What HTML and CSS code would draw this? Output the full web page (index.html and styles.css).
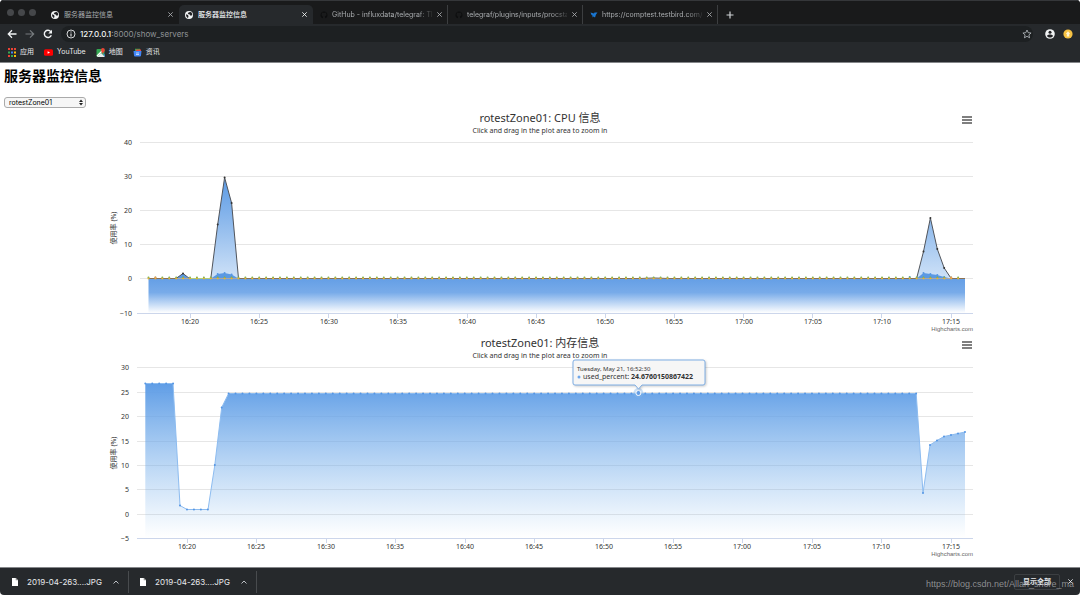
FILE: index.html
```html
<!DOCTYPE html>
<html lang="zh-CN">
<head>
<meta charset="utf-8">
<title>服务器监控信息</title>
<link rel="stylesheet" href="styles.css">
</head>
<body>
<svg class="defs" aria-hidden="true">
  <symbol id="globe" viewBox="0 0 16 16"><circle cx="8" cy="8" r="8" fill="#f1f3f4"/><path d="M2 6.500l4 1.500 1 2.500-1 3.500C3.500 13 2 10.500 2 6.500zM8 2.500l4-.5c2 1.500 2.800 4 2.300 6.500L11 9.500 9.500 7 7 6.500 5.500 4.500z" fill="#202124"/></symbol>
  <symbol id="cross" viewBox="0 0 8 8"><path d="M1.500 1.500l5 5M6.500 1.500L1.500 6.500" stroke="currentColor" stroke-width="1" fill="none"/></symbol>
  <symbol id="cat" viewBox="0 0 16 16"><path d="M8 1a7 7 0 0 0-2.200 13.600v-2.400C3.500 12.500 3.400 11 2.800 10.700c1.200-.2 1.500 1.200 3 .8.100-.6.300-1 .6-1.200C4 10 3 8.800 3 6.800c0-.8.300-1.500.8-2-.2-.7-.1-1.400.1-1.900.8 0 1.500.4 2 .8a8 8 0 0 1 4.200 0c.5-.4 1.200-.8 2-.8.300.5.300 1.300.1 1.900.5.500.8 1.200.8 2 0 2-1 3.200-3.400 3.500.4.400.6.900.6 1.600v2.700A7 7 0 0 0 8 1z" fill="#0c0d0e"/></symbol>
  <symbol id="bars" viewBox="0 0 10 8"><path d="M0 1h10M0 4h10M0 7h10" stroke="#555" stroke-width="1.600"/></symbol>
  <symbol id="file" viewBox="0 0 6 8"><path d="M0 0h3.700L6 2.300V8H0z" fill="#fff"/><path d="M3.700 0v2.300H6z" fill="#999"/></symbol>
  <symbol id="chevron" viewBox="0 0 8 8"><path d="M1.500 5.500L4 3l2.500 2.500" stroke="#bdc1c6" fill="none"/></symbol>
</svg>

<header class="browser">
  <div class="tabstrip">
    <div class="lights"><i></i><i></i><i></i></div>
    <div class="tab"><svg class="favicon"><use href="#globe"/></svg><span class="tab-title">服务器监控信息</span><button class="close" aria-label="关闭"><svg><use href="#cross"/></svg></button></div>
    <div class="tab active"><svg class="favicon"><use href="#globe"/></svg><span class="tab-title">服务器监控信息</span><button class="close" aria-label="关闭"><svg><use href="#cross"/></svg></button></div>
    <div class="tab split"><svg class="favicon"><use href="#cat"/></svg><span class="tab-title fade">GitHub - influxdata/telegraf: Th</span><button class="close" aria-label="关闭"><svg><use href="#cross"/></svg></button></div>
    <div class="tab split"><svg class="favicon"><use href="#cat"/></svg><span class="tab-title fade">telegraf/plugins/inputs/procsta</span><button class="close" aria-label="关闭"><svg><use href="#cross"/></svg></button></div>
    <div class="tab split"><svg class="favicon" viewBox="0 0 16 16"><path d="M1 3l7 2 1-2h6l-3 4-2 6-3-2-2 2V9L3 8z" fill="#1976d2"/></svg><span class="tab-title fade">https://comptest.testbird.com/</span><button class="close" aria-label="关闭"><svg><use href="#cross"/></svg></button></div>
    <button class="newtab" aria-label="新标签页"><svg viewBox="0 0 8 8"><path d="M4 .500v7M.500 4h7" stroke="#d0d3d6" stroke-width="1.200"/></svg></button>
  </div>
  <div class="toolbar">
    <button aria-label="后退"><svg viewBox="0 0 10 10"><path d="M9.500 5H1.500M5 1.300L1.300 5 5 8.700" stroke="#f1f3f4" stroke-width="1.300" fill="none"/></svg></button>
    <button aria-label="前进"><svg viewBox="0 0 10 10"><path d="M.5 5h8M5 1.300L8.700 5 5 8.700" stroke="#777b7e" stroke-width="1.200" fill="none"/></svg></button>
    <button aria-label="重新加载"><svg viewBox="0 0 10 10"><path d="M8.300 6.200A3.600 3.600 0 1 1 7.800 2.700" stroke="#f1f3f4" stroke-width="1.400" fill="none"/><path d="M9 .8v3.700H5.300z" fill="#f1f3f4"/></svg></button>
    <div class="address">
      <svg viewBox="0 0 10 10"><circle cx="5" cy="5" r="4" stroke="#d5d7d9" fill="none"/><path d="M5 4.500v3M5 2.400v1.200" stroke="#d5d7d9" stroke-width="1.200"/></svg>
      <p class="url"><b>127.0.0.1</b>:8000/show_servers</p>
      <button aria-label="收藏"><svg viewBox="0 0 10 10"><path d="M5 1l1.200 2.700 2.900.3-2.200 1.900.7 2.900L5 7.300 2.400 8.800l.7-2.900L.9 4l2.900-.3z" stroke="#bdc1c6" stroke-width=".8" fill="none"/></svg></button>
    </div>
    <button aria-label="用户"><svg viewBox="0 0 10 10"><circle cx="5" cy="5" r="4.800" fill="#f1f3f4"/><circle cx="5" cy="3.300" r="1.500" fill="#202124"/><path d="M2 7c.5-2 5.500-2 6 0-1.500 2-4.500 2-6 0z" fill="#202124"/></svg></button>
    <button aria-label="更新"><svg viewBox="0 0 10 10"><circle cx="5" cy="5" r="4.600" fill="#f6c244"/><path d="M5 2.200L7.200 5H6.200v2.500H3.800V5h-1z" fill="#fff3d0"/></svg></button>
  </div>
  <nav class="bookmarks">
    <a href="#"><svg viewBox="0 0 9 9"><path d="M1 0h2v2H1zM1 7h2v2H1z" fill="#ea4335"/><path d="M4 0h2v2H4zM7 0h2v2H7z" fill="#ea4335"/><path d="M1 3.500h2v2H1z" fill="#34a853"/><path d="M4 3.500h2v2H4z" fill="#4285f4"/><path d="M7 3.500h2v2H7zM7 7h2v2H7z" fill="#fbbc05"/><path d="M4 7h2v2H4z" fill="#34a853"/></svg>应用</a>
    <a href="#"><svg viewBox="0 0 9 9"><rect y="1.300" width="9" height="6.400" rx="1.500" fill="#f00"/><path d="M3.600 3.200v2.600L6 4.500z" fill="#fff"/></svg>YouTube</a>
    <a href="#"><svg viewBox="0 0 9 9"><rect x=".5" y="1" width="8" height="8" rx="1" fill="#34a853"/><path d="M1 9l4-4 4 4z" fill="#e8eaed"/><path d="M1 8l6-6" stroke="#fff" stroke-width="1.200"/><path d="M6.500 4.500L9 7v2z" fill="#4285f4"/><path d="M6.800 6C6.500 4.500 5 3.800 5 2a1.900 1.900 0 0 1 3.800 0c0 1.800-1.700 2.500-2 4z" fill="#ea4335"/></svg>地图</a>
    <a href="#"><svg viewBox="0 0 9 9"><path d="M2 .800h5v3H2z" fill="#34a853"/><path d="M3 1.500h5v3H3z" fill="#ea4335"/><path d="M.5 3h8l-.5 4.500a1 1 0 0 1-1 1H2a1 1 0 0 1-1-1z" fill="#4285f4"/><path d="M3 5h3M3 6.500h3" stroke="#dbe8ff" stroke-width=".8"/></svg>资讯</a>
  </nav>
</header>

<main>
  <h1>服务器监控信息</h1>
  <label class="picker"><select aria-label="服务器"><option>rotestZone01</option></select><svg viewBox="0 0 4 6"><path d="M0 2.500L2 0l2 2.500zM0 3.500L2 6l2-2.500z" fill="#222"/></svg></label>

  <figure class="chart">
    <svg viewBox="0 0 1080 225" role="img" aria-label="CPU 信息">
      <defs>
        <linearGradient id="cpu" gradientUnits="userSpaceOnUse" x1="0" y1="69" x2="0" y2="190"><stop offset="0" stop-color="#5b9ae4"/><stop offset="1" stop-color="#e6f0fb"/></linearGradient>
        <linearGradient id="base" gradientUnits="userSpaceOnUse" x1="0" y1="170" x2="0" y2="204"><stop offset="0" stop-color="#659fe6"/><stop offset=".4" stop-color="#78abe9"/><stop offset="1" stop-color="#fff"/></linearGradient>
      </defs>
      <path class="grid" d="M140 33.500h833M140 67.500h833M140 101.500h833M140 135.500h833M140 169.500h833"/>
      <path class="axis" d="M137 204.500h836M190.500 204v5M259.500 204v5M328.500 204v5M397.500 204v5M467.500 204v5M536.500 204v5M605.500 204v5M674.500 204v5M743.500 204v5M812.500 204v5M881.500 204v5M951.500 204v5"/>
      <path d="M148.500 170H965v34H148.500z" fill="url(#base)"/>
      <path d="M210.800 170L217.700 115.500 224.600 68.500 231.600 94 238.500 170zM916.600 170L923.500 142.500 930.400 109 937.300 140 944.200 159 951.200 169z" fill="url(#cpu)"/>
      <path d="M176 169.500L183 164.500 189 169.500zM210.800 169.500L217.700 165 224.600 164 231.600 165.500 238.500 169.500zM916.600 169.500L923.500 164 930.400 165 937.300 166 944.200 168 951.200 169.500z" fill="#5b99e3"/>
      <path class="dots blue" d="M217.700 165h0M224.600 164h0M231.600 165.500h0M923.500 164h0M930.400 165h0M937.300 166h0M944.200 168h0M909.700 168h0"/>
      <path d="M148.500 169.500H176L183 164.500 189.500 169.500H210.800L217.700 115.500 224.600 68.500 231.600 94 238.500 169.500H640L654 169 668 169.500H916.600L923.500 142.500 930.400 109 937.300 140 944.200 159 951.200 169.500H965" class="cpu-line"/>
      <path class="dots dark" d="M183 164.500h0M217.700 115.500h0M224.600 68.500h0M231.600 94h0M923.500 142.500h0M930.400 109h0M937.300 140h0M944.200 159h0"/>
      <path d="M148.500 169.500H965" stroke="#c98f4b" opacity=".5"/>
      <path d="M189 169.500h22" stroke="#b5cf75"/>
      <path class="dots green series" d="M148.500 168.500H965"/>
      <path class="dots gold series" d="M148.500 169.500H965"/>
      <path class="dots orange" d="M155.400 168.500h0M951.200 168.500h0"/>
      <g class="ylabels"><text x="132" y="36">40</text><text x="132" y="70">30</text><text x="132" y="104">20</text><text x="132" y="138">10</text><text x="132" y="172">0</text><text x="132" y="207">−10</text></g>
      <g class="xlabels"><text x="190" y="215">16:20</text><text x="259" y="215">16:25</text><text x="329" y="215">16:30</text><text x="398" y="215">16:35</text><text x="467" y="215">16:40</text><text x="536" y="215">16:45</text><text x="605" y="215">16:50</text><text x="674" y="215">16:55</text><text x="744" y="215">17:00</text><text x="813" y="215">17:05</text><text x="882" y="215">17:10</text><text x="951" y="215">17:15</text></g>
      <text class="title" x="540" y="13">rotestZone01: CPU 信息</text>
      <text class="subtitle" x="540" y="24">Click and drag in the plot area to zoom in</text>
      <text class="unit" transform="translate(116 119) rotate(-90)">使用率 (%)</text>
      <text class="credit" x="973" y="222">Highcharts.com</text>
      <use href="#bars" x="962" y="7" width="10" height="8"/>
    </svg>
  </figure>

  <figure class="chart">
    <svg viewBox="0 0 1080 225" role="img" aria-label="内存信息">
      <defs>
        <linearGradient id="mem" gradientUnits="userSpaceOnUse" x1="0" y1="49" x2="0" y2="204"><stop offset="0" stop-color="#5f9de6"/><stop offset="1" stop-color="#7cb5ec" stop-opacity="0"/></linearGradient>
      </defs>
      <path class="grid" d="M137 33.500h836M137 58.500h836M137 82.500h836M137 107.500h836M137 131.500h836M137 155.500h836M137 180.500h836"/>
      <path class="axis" d="M137 204.500h836M187.500 204v5M256.500 204v5M326.500 204v5M395.500 204v5M465.500 204v5M534.500 204v5M603.500 204v5M673.500 204v5M742.500 204v5M812.500 204v5M881.500 204v5M951.500 204v5"/>
      <path fill="url(#mem)" d="M145.300 204V49.500H173L180 171.500 187 175.500H208L214.800 131 221.700 73.500 228.600 59.500H916.200L923 159 930 111 937 106.500 944 102.500 951 101 958 99.500 965 98V204z"/>
      <path class="mem-line" d="M145.300 49.500H173L180 171.500 187 175.500H208L214.800 131 221.700 73.500 228.600 59.500H916.200L923 159 930 111 937 106.500 944 102.500 951 101 958 99.500 965 98"/>
      <path class="dots blue series2" d="M145.300 49.500H173.200"/>
      <path class="dots blue series2" d="M187 175.500H208.100"/>
      <path class="dots blue series2" d="M228.600 59.500H916.300"/>
      <path class="dots blue" d="M180 171.500h0M214.800 131h0M221.700 73.500h0M923 159h0M930 111h0M937 106.500h0M944 102.500h0M951 101h0M958 99.500h0M965 98h0"/>
      <g class="ylabels"><text x="129" y="36">30</text><text x="129" y="61">25</text><text x="129" y="85">20</text><text x="129" y="110">15</text><text x="129" y="134">10</text><text x="129" y="158">5</text><text x="129" y="183">0</text><text x="129" y="207">−5</text></g>
      <g class="xlabels"><text x="187" y="215">16:20</text><text x="256" y="215">16:25</text><text x="326" y="215">16:30</text><text x="395" y="215">16:35</text><text x="465" y="215">16:40</text><text x="534" y="215">16:45</text><text x="604" y="215">16:50</text><text x="673" y="215">16:55</text><text x="742" y="215">17:00</text><text x="812" y="215">17:05</text><text x="881" y="215">17:10</text><text x="951" y="215">17:15</text></g>
      <text class="title" x="540" y="13">rotestZone01: 内存信息</text>
      <text class="subtitle" x="540" y="24">Click and drag in the plot area to zoom in</text>
      <text class="unit" transform="translate(116 119) rotate(-90)">使用率 (%)</text>
      <text class="credit" x="973" y="222">Highcharts.com</text>
      <use href="#bars" x="962" y="7" width="10" height="8"/>
      <circle cx="638.400" cy="59" r="5" fill="#7cb5ec" opacity=".4"/>
      <circle cx="638.400" cy="59" r="2.500" fill="#659fe6" stroke="#fff"/>
      <path class="tip" d="M575 26H703q2 0 2 2V49q0 2-2 2H642l-3.500 4-3.500-4H575q-2 0-2-2V28q0-2 2-2z"/>
      <text class="tip-date" x="577" y="37">Tuesday, May 21, 16:52:30</text>
      <circle cx="579" cy="43" r="1.500" fill="#6ea6ea"/>
      <text class="tip-value" x="583" y="45">used_percent: <tspan>24.6760150867422</tspan></text>
    </svg>
  </figure>
</main>

<footer class="downloads">
  <button class="download"><svg class="doc"><use href="#file"/></svg><span>2019-04-263....JPG</span><svg class="chev"><use href="#chevron"/></svg></button>
  <button class="download"><svg class="doc"><use href="#file"/></svg><span>2019-04-263....JPG</span><svg class="chev"><use href="#chevron"/></svg></button>
  <button class="show-all">显示全部</button>
  <button class="close" aria-label="关闭"><svg><use href="#cross"/></svg></button>
  <span class="watermark">https://blog.csdn.net/Allan_shore_ma</span>
</footer>
</body>
</html>
```
FILE: styles.css
```css
* { box-sizing: border-box; }
body {
  margin: 0;
  min-height: 100vh;
  display: flex;
  flex-direction: column;
  background: #fff;
  color: #000;
  font: 7px/10px Inter, "Noto Sans CJK SC", sans-serif;
}
button { border: 0; padding: 0; background: none; color: inherit; font: inherit; display: flex; align-items: center; }
svg { display: block; }
.defs { position: absolute; width: 0; height: 0; }

.browser { background: #26292c; color: #e8eaed; border-bottom: 1px solid #85878a; border-radius: 4px 4px 0 0; overflow: hidden; }
.tabstrip { display: flex; align-items: stretch; height: 24px; padding-top: 4px; background: #191a1b; border-top: 1px solid #35373a; }
.lights { display: flex; gap: 4px; width: 45px; padding: 4px 0 0 7px; flex: none; }
.lights i { width: 7px; height: 7px; border-radius: 50%; background: #45474a; }
.tab { display: flex; align-items: center; flex: 0 1 134px; min-width: 0; padding: 0 5px 0 6px; color: #a9acaf; gap: 5px; }
.tab.active { background: #26292c; color: #f1f3f4; border-radius: 5px 5px 0 0; font-weight: 500; }
.tab.split { flex-basis: 135px; border-right: 1px solid #3c3e40; padding-right: 4px; padding-left: 7px; gap: 4px; }
.favicon { width: 8px; height: 8px; flex: none; }
.tab-title { flex: 1; min-width: 0; overflow: hidden; white-space: nowrap; }
.fade { -webkit-mask-image: linear-gradient(90deg, #000 85%, #0003); mask-image: linear-gradient(90deg, #000 85%, #0003); }
.close svg { width: 7px; height: 7px; }
.newtab { margin-left: 8px; }
.newtab svg { width: 8px; height: 8px; }

.toolbar { display: flex; align-items: center; gap: 8px; padding: 2px 7px 0; }
.toolbar svg { width: 10px; height: 10px; }
.address { flex: 1; display: flex; align-items: center; height: 16px; margin-right: 4px; padding: 0 1px 0 5px; border-radius: 8px; background: #1d2022; gap: 4px; }
.url { flex: 1; margin: 0; font-size: 8px; color: #909396; }
.url b { font-weight: 500; color: #f1f3f4; }

.bookmarks { display: flex; gap: 10px; padding: 5px 7px; }
.bookmarks a { display: flex; align-items: center; gap: 4px; color: #e8eaed; text-decoration: none; }
.bookmarks svg { width: 9px; height: 9px; }

main { flex: 1; padding-bottom: 8px; }
h1 { margin: 0; padding: 4px 4px 12px; font-size: 14px; line-height: 18px; font-weight: 700; }
.picker { position: relative; display: block; width: 82px; margin: 0 4px 1px; }
.picker select { display: block; width: 100%; height: 11px; padding: 0 4px; border: 1px solid #aaa; border-radius: 3px; background: #f6f6f6; color: #000; font: 7px/9px Inter, sans-serif; appearance: none; }
.picker svg { position: absolute; right: 3px; top: 2px; width: 4px; height: 7px; }

.chart { margin: 0; }
.chart svg { width: 100%; height: auto; font-family: "Noto Sans", "Noto Sans CJK SC", sans-serif; fill: none; }
.grid { stroke: #e6e6e6; }
.axis { stroke: #ccd6eb; }
.chart text { fill: #333; font-size: 7px; }
.ylabels { text-anchor: end; }
.xlabels { text-anchor: middle; }
.chart .title { font-size: 11px; text-anchor: middle; }
.chart .subtitle { text-anchor: middle; }
.chart .unit { text-anchor: middle; }
.chart .credit { font: 6px "Liberation Sans", sans-serif; fill: #666; text-anchor: end; }
.cpu-line { stroke: #50545b; }
.mem-line { stroke: #8dbcf0; }
.dots { stroke-width: 2; stroke-linecap: round; }
.series { stroke-dasharray: 0 6.920; }
.series2 { stroke-dasharray: 0 6.945; }
.blue { stroke: #5596e4; }
.dark { stroke: #333; }
.green { stroke: #6fae4f; }
.gold { stroke: #e3b23a; }
.orange { stroke: #f0955a; }
.tip { fill: #f6f6f6; stroke: #7faee4; filter: drop-shadow(1px 1px 1px #0003); }
.chart .tip-date { font-size: 6px; }
.tip-value tspan { font-weight: 700; }

.downloads { position: relative; display: flex; align-items: center; height: 28px; padding-right: 6px; background: #26292c; border-top: 1px solid #85878a; border-radius: 0 0 4px 4px; color: #e8eaed; font-size: 8px; }
.download { height: 22px; width: 129px; padding: 0 8px 0 12px; border-right: 1px solid #484b4e; }
.download + .download { width: 128px; padding-left: 11px; }
.download span { flex: 1; text-align: left; padding-left: 9px; }
.doc { width: 6px; height: 8px; }
.chev { width: 8px; height: 8px; }
.show-all { margin-left: auto; margin-right: 7px; padding: 2px 8px; border: 1px solid #3c3f42; border-radius: 2px; font-size: 7px; font-weight: 700; }
.watermark { position: absolute; right: 6px; bottom: 5px; color: #a6a8aacc; font: 9px/12px "Liberation Sans", sans-serif; }
```
